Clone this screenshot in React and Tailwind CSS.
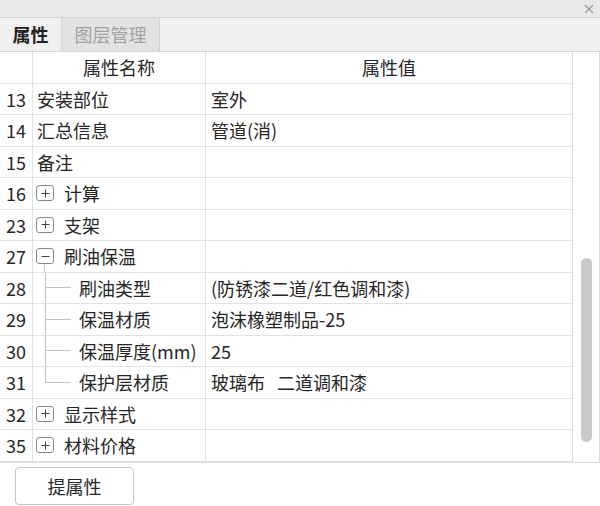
import React from 'react';

const rows = [
  { no: 13, name: '安装部位', value: '室外' },
  { no: 14, name: '汇总信息', value: '管道(消)' },
  { no: 15, name: '备注', value: '' },
  { no: 16, name: '计算', value: '', toggle: '+' },
  { no: 23, name: '支架', value: '', toggle: '+' },
  { no: 27, name: '刷油保温', value: '', toggle: '-', open: true },
  { no: 28, name: '刷油类型', value: '(防锈漆二道/红色调和漆)', child: true },
  { no: 29, name: '保温材质', value: '泡沫橡塑制品-25', child: true },
  { no: 30, name: '保温厚度(mm)', value: '25', child: true },
  {
    no: 31,
    name: '保护层材质',
    value: (
      <>
        玻璃布 <span className="ml-[12px]">二道调和漆</span>
      </>
    ),
    child: true,
    last: true,
  },
  { no: 32, name: '显示样式', value: '', toggle: '+' },
  { no: 35, name: '材料价格', value: '', toggle: '+' },
];

function ToggleBox({ sign }) {
  return (
    <div className="w-[18px] h-[16px] border border-[#8a8a8a] rounded-[3px] bg-white flex items-center justify-center">
      {sign === '+' ? (
        <svg width="9" height="9" viewBox="0 0 9 9">
          <path d="M0.5 4.5h8M4.5 0.5v8" stroke="#444" strokeWidth="1" />
        </svg>
      ) : (
        <svg width="9" height="9" viewBox="0 0 9 9">
          <path d="M0.5 4.5h8" stroke="#444" strokeWidth="1" />
        </svg>
      )}
    </div>
  );
}

function NameCell({ row }) {
  if (row.child) {
    return (
      <div className="flex items-stretch h-full">
        <div className="ml-[12px] w-[26px] flex flex-col">
          <div className="flex-1 border-l border-b border-[#c4c4c4]" />
          <div className={'flex-1 ' + (row.last ? '' : 'border-l border-[#c4c4c4]')} />
        </div>
        <span className="ml-[8px] self-center whitespace-nowrap">{row.name}</span>
      </div>
    );
  }
  if (row.toggle) {
    return (
      <div className="flex items-stretch h-full">
        <div className="ml-[3px] w-[18px] flex flex-col items-start">
          <div className="flex-1" />
          <ToggleBox sign={row.toggle} />
          <div className={'flex-1 ml-[8px] ' + (row.open ? 'border-l border-[#c4c4c4]' : '')} />
        </div>
        <span className="ml-[10px] self-center">{row.name}</span>
      </div>
    );
  }
  return <span className="pl-[4px]">{row.name}</span>;
}

export default function App() {
  return (
    <div
      className="w-[600px] h-[506px] bg-white flex flex-col text-[18px] text-[#262626] overflow-hidden"
      style={{ fontFamily: '"Noto Sans CJK SC", "Noto Sans", sans-serif' }}
    >
      {/* title bar */}
      <div className="h-[18px] bg-[#e9e9e9] border-b border-[#d6d6d6] flex items-center justify-end pr-[6px]">
        <svg width="10" height="10" viewBox="0 0 10 10">
          <path d="M1 1l8 8M9 1l-8 8" stroke="#9a9a9a" strokeWidth="1.2" />
        </svg>
      </div>

      {/* tabs */}
      <div className="h-[34px] bg-[#f0f0f0] border-b border-[#d6d6d6] flex">
        <div className="w-[62px] flex items-center justify-center font-bold text-[#222] border-r border-[#d6d6d6]">
          属性
        </div>
        <div className="w-[98px] bg-[#e2e2e2] border-r border-[#d0d0d0] flex items-center justify-center text-[#a2a2a2]">
          图层管理
        </div>
      </div>

      {/* table */}
      <div className="h-[411px] flex border-r border-b border-[#dcdcdc]">
        <div className="w-[573px] flex flex-col border-r border-[#dcdcdc]">
          <div className="h-[31.5px] flex border-b border-[#e2e2e2] leading-none">
            <div className="w-[33px] border-r border-[#e2e2e2]" />
            <div className="w-[173px] border-r border-[#e2e2e2] flex items-center justify-center">属性名称</div>
            <div className="flex-1 flex items-center justify-center">属性值</div>
          </div>
          {rows.map((r) => (
            <div key={r.no} className="h-[31.5px] flex border-b border-[#e2e2e2] leading-none">
              <div className="w-[33px] border-r border-[#e2e2e2] flex items-center justify-center">{r.no}</div>
              <div className="w-[173px] border-r border-[#e2e2e2] flex items-center">
                <NameCell row={r} />
              </div>
              <div className="flex-1 flex items-center pl-[5px] whitespace-nowrap">{r.value}</div>
            </div>
          ))}
        </div>
        <div className="flex-1 flex justify-center pt-[206px]">
          <div className="w-[11px] h-[184px] rounded-full bg-[#c9c9c9]" />
        </div>
      </div>

      {/* footer */}
      <div className="flex-1 pl-[15px] pt-[4px]">
        <button className="w-[119px] h-[38px] border border-[#c6c6c6] rounded-[4px] bg-white text-[18px] text-[#262626]">
          提属性
        </button>
      </div>
    </div>
  );
}
